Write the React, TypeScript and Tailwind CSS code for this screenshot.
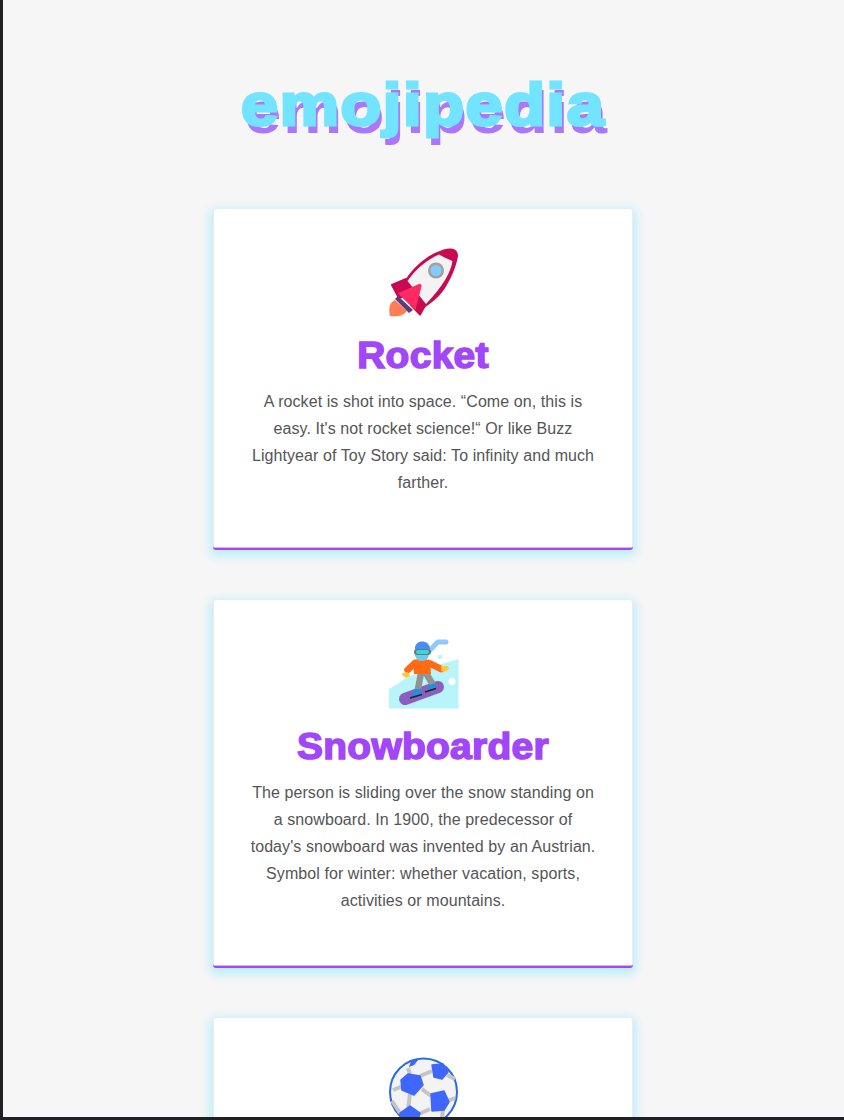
import React from 'react';

const RocketIcon = () => (
  <svg viewBox="0 0 70 70" className="w-[70px] h-[70px] mx-auto block translate-x-px">
    <path d="M3 37 L17 31 L25 45 L10 50 Z" fill="#c80a50" strokeLinejoin="round" stroke="#c80a50" strokeWidth="2" />
    <path d="M31 66.5 L39 52 L25 45 L22 57 Z" fill="#c80a50" strokeLinejoin="round" stroke="#c80a50" strokeWidth="2" />
    <path d="M17 31 C24 20 36 9 48 4 C53 2 58 0 62 0.5 C67 1 69 4 69 8 C68 16 62 32 54 43 C49 50 42 55 35 60 Z" fill="#c80a50" />
    <path d="M18.5 33 C26 22 37 12 50 6.5 C54 9 59 11 63.5 13 C62 24 54 38 37 56 Z" fill="#f3f3f3" />
    <circle cx="47" cy="22.5" r="8" fill="#a0a0a0" />
    <circle cx="47" cy="22.5" r="5.5" fill="#88c9fb" />
    <path d="M1 68 C-1 60 1 54 6 52 L18 63 C14 68 8 69 1 68 Z" fill="#ff7d55" />
    <path d="M9 48 L24 62 L20 65 L6 51 Z" fill="#5b3b7a" />
    <path d="M9.5 45.5 L30 36.5 C31.5 36 32.5 37 32 38.5 L26 61.5 Z" fill="#ff2a62" stroke="#ff2a62" strokeLinejoin="round" />
  </svg>
);

const SnowboarderIcon = () => (
  <svg viewBox="0 0 70 70" className="w-[70px] h-[70px] mx-auto block translate-x-px">
    <path d="M0 69.5 L0 50 L19 38 L45 27 L69.5 20 L69.5 69.5 Z" fill="#b9f4fb" />
    <circle cx="63" cy="42.5" r="3.5" fill="#ffffff" />
    <circle cx="51" cy="18" r="2.3" fill="#b9f4fb" />
    <circle cx="8" cy="44" r="1.6" fill="#ffffff" />
    <path d="M41 11 C45 8 47 4 49 3 L57 3" fill="none" stroke="#8fc9fb" strokeWidth="5" strokeLinecap="round" />
    <path d="M16 60 L49 48" stroke="#8a5fc0" strokeWidth="12" strokeLinecap="round" />
    <path d="M32 34 L29 50 M37 34 L44 46" stroke="#939393" strokeWidth="6.5" fill="none" strokeLinecap="round" />
    <path d="M22 58 L32 55 L32 50 L26 50 Z" fill="#1f8fe0" />
    <path d="M38 52 L47 48 L47 44 L40 46 Z" fill="#1f8fe0" />
    <path d="M21 59 L33 55.5 M36 53 L47 49.5" stroke="#222222" strokeWidth="1.5" />
    <path d="M18.5 31 L26 24 M40 24 L52 30" stroke="#ff6a13" strokeWidth="6.5" fill="none" strokeLinecap="round" />
    <path d="M24 22 C28 19 37 19 41 22 L42 35 L25 35 Z" fill="#ff6a13" />
    <path d="M13 34 L19 33 L21 37 L17 39 C15 38 13 36 13 34 Z" fill="#ffc83d" />
    <path d="M52 27 L59 27 L60 30 L56 33 L52 32 Z" fill="#ffc83d" />
    <path d="M26 9 L41 9 L40 16 C39 20 36 22 33 22 C29 22 27 20 26 16 Z" fill="#6fc9ec" />
    <path d="M26 10 C25 0 41 0 41 10 Z" fill="#4a8cf5" />
    <rect x="25" y="10" width="17" height="6" rx="3" fill="#5d7a88" />
    <rect x="27" y="11" width="13" height="4" rx="2" fill="#3dd6d0" />
  </svg>
);

const BallIcon = () => (
  <svg viewBox="0 0 70 70" className="w-[70px] h-[70px] mx-auto block translate-x-px">
    <circle cx="34.5" cy="35" r="33.5" fill="#f3f3f3" stroke="#2a6ae0" strokeWidth="2" />
    <path d="M31 19 L43 14 M33 32 L42 39 M21 37 L19 53 M30 57 L41 52 M54 52 L53 62 M14 29 L4 33 M58 44 L66 41 M3 44 L11 56 M19 11 L21 17 M58 18 L66 22" stroke="#c4c4c4" strokeWidth="4" fill="none" />
    <path d="M19 17 L31 19 L34 28 L25 38 L13 33 L12 23 Z" fill="#3f66ff" stroke="#3f66ff" strokeLinejoin="round" strokeWidth="1.5" />
    <path d="M43 8 L54 7 L59 15 L53 22 L45 20 Z" fill="#3f66ff" stroke="#3f66ff" strokeLinejoin="round" strokeWidth="1.5" />
    <path d="M42 37 L55 34 L60 45 L55 53 L43 54 Z" fill="#3f66ff" stroke="#3f66ff" strokeLinejoin="round" strokeWidth="1.5" />
    <path d="M11 56 L21 49 L31 56 L28 67 L16 67 Z" fill="#3f66ff" stroke="#3f66ff" strokeLinejoin="round" strokeWidth="1.5" />
    <path d="M22 4 L30 2 L25 8 L20 10 Z" fill="#3f66ff" />
  </svg>
);

const Card = ({ icon, title, children, clipped }: { icon: React.ReactNode; title?: string; children?: React.ReactNode; clipped?: boolean }) => (
  <div className={`w-[420px] shrink-0 bg-white rounded-[3px] pt-[39px] px-[35px] text-center border-b-2 border-[#a146f9] shadow-[0_3px_10px_3px_rgba(150,235,250,0.65),inset_0_-1px_0_#d4b0fd,inset_1px_0_0_#f3e4ff,inset_-1px_0_0_#f3e4ff] ${clipped ? 'h-[340px]' : 'pb-[52px]'}`}>
    {icon}
    {title && (
      <h2 className="mt-[17px] text-[36px] leading-[41px] font-bold text-[#a146f9] tracking-[0.3px] scale-x-[1.08] [-webkit-text-stroke:1.5px_#a146f9]">
        {title}
      </h2>
    )}
    {children && <p className="mt-[12px] text-[16px] leading-[27px] text-[#555555] tracking-[0.08px]">{children}</p>}
  </div>
);

export default function App() {
  return (
    <div className="box-border h-[1120px] overflow-hidden border-l-[3px] border-b-[3px] border-[#202124] bg-[#f6f6f6] font-['Liberation_Sans',Arial,sans-serif]">
      <div className="flex flex-col items-center pt-[70px] pr-px">
        <h1 className="text-[60px] leading-[69px] font-bold text-[#72e4ff] tracking-[1.5px] scale-x-[1.11] [-webkit-text-stroke:3px_#72e4ff] [text-shadow:3px_8px_0_#ac76fa]">
          emojipedia
        </h1>
        <div className="mt-[70px] flex flex-col items-center gap-[50px]">
          <Card icon={<RocketIcon />} title="Rocket">
            A rocket is shot into space. “Come on, this is easy. It's not rocket science!“ Or like Buzz Lightyear of Toy Story said: To infinity and much farther.
          </Card>
          <Card icon={<SnowboarderIcon />} title="Snowboarder">
            The person is sliding over the snow standing on a snowboard. In 1900, the predecessor of today's snowboard was invented by an Austrian. Symbol for winter: whether vacation, sports, activities or mountains.
          </Card>
          <Card icon={<BallIcon />} clipped />
        </div>
      </div>
    </div>
  );
}
